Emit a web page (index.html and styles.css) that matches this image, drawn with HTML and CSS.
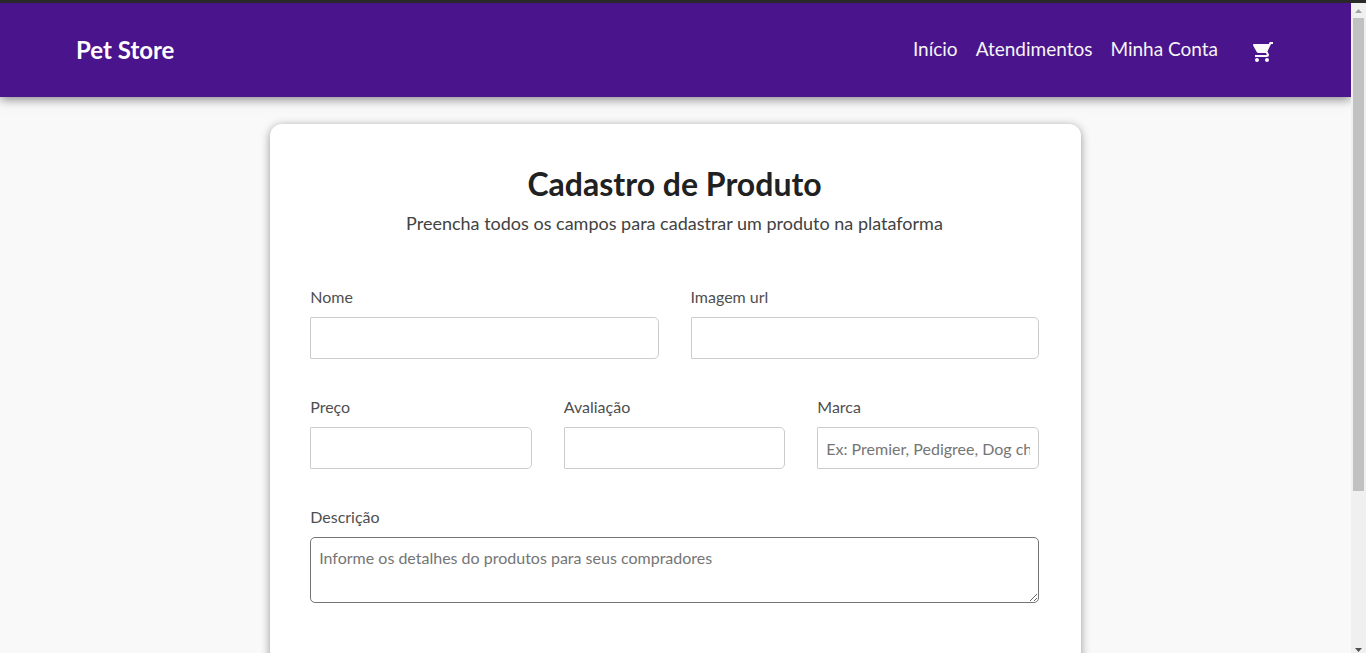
FILE: index.html
```html
<!DOCTYPE html>
<html lang="pt-BR">
<head>
<meta charset="utf-8">
<meta name="viewport" content="width=device-width, initial-scale=1">
<title>Pet Store</title>
<link rel="stylesheet" href="styles.css">
</head>
<body>
<div class="window">
  <div class="page">
    <header class="header">
      <a class="brand" href="#">Pet Store</a>
      <nav class="nav">
        <a class="nav-link" href="#">Início</a>
        <a class="nav-link" href="#">Atendimentos</a>
        <a class="nav-link" href="#">Minha Conta</a>
        <a class="cart" href="#" aria-label="Carrinho">
          <svg class="cart-icon" viewBox="0 0 24 24" aria-hidden="true"><g transform="matrix(-1 0 0 1 24 0)"><path d="M7 18c-1.100 0-1.990.9-1.990 2S5.900 22 7 22s2-.9 2-2-.9-2-2-2zM1 2v2h2l3.600 7.590-1.350 2.450c-.16.280-.25.610-.25.960 0 1.100.9 2 2 2h12v-2H7.420c-.14 0-.25-.11-.25-.25l.03-.12.900-1.630h7.450c.75 0 1.410-.41 1.750-1.030l3.580-6.490c.08-.14.120-.31.120-.48 0-.55-.45-1-1-1H5.210l-.94-2H1zm16 16c-1.100 0-1.990.9-1.990 2s.89 2 1.990 2 2-.9 2-2-.9-2-2-2z"/></g></svg>
        </a>
      </nav>
    </header>
    <main class="main">
      <form class="card">
        <h1 class="title">Cadastro de Produto</h1>
        <p class="subtitle">Preencha todos os campos para cadastrar um produto na plataforma</p>
        <div class="fields">
          <div class="row">
            <div class="field"><label class="label" for="nome">Nome</label><input class="input" id="nome" type="text"></div>
            <div class="field"><label class="label" for="imagem">Imagem url</label><input class="input" id="imagem" type="text"></div>
          </div>
          <div class="row">
            <div class="field"><label class="label" for="preco">Preço</label><input class="input" id="preco" type="text"></div>
            <div class="field"><label class="label" for="avaliacao">Avaliação</label><input class="input" id="avaliacao" type="text"></div>
            <div class="field"><label class="label" for="marca">Marca</label><input class="input" id="marca" type="text" placeholder="Ex: Premier, Pedigree, Dog chow"></div>
          </div>
          <div class="field"><label class="label" for="descricao">Descrição</label><textarea class="textarea" id="descricao" rows="2" placeholder="Informe os detalhes do produtos para seus compradores"></textarea></div>
        </div>
      </form>
    </main>
  </div>
  <div class="scrollbar" aria-hidden="true">
    <svg class="arrow arrow-up" viewBox="0 0 7 4"><path d="M0 4h7L3.500 0z"/></svg>
    <div class="track"><div class="thumb"></div></div>
    <svg class="arrow arrow-down" viewBox="0 0 7 4"><path d="M0 0h7L3.500 4z"/></svg>
  </div>
</div>
</body>
</html>
```
FILE: styles.css
```css
* {
  box-sizing: border-box;
}

body {
  margin: 0;
  background: #f9f9f9;
  font-family: Lato, "Open Sans", sans-serif;
  overflow: hidden;
}

.window {
  display: flex;
  height: 100vh;
  border-top: 3px solid #29292a;
}

.page {
  flex: 1;
  min-width: 0;
  overflow: hidden;
}

.header {
  display: flex;
  align-items: center;
  justify-content: space-between;
  padding: 23px 77px 23px 76px;
  background: #4a148c;
  box-shadow: 0 2px 10px rgba(0, 0, 0, 0.5);
}

.brand {
  color: #fff;
  font-size: 24px;
  line-height: 48px;
  font-weight: 700;
  text-decoration: none;
}

.nav {
  display: flex;
  align-items: center;
  gap: 18px;
}

.nav-link {
  padding-bottom: 2px;
  color: #f5f5f5;
  font-size: 19px;
  line-height: 44px;
  text-decoration: none;
}

.cart {
  display: flex;
  margin-left: 14px;
  padding-top: 4px;
}

.cart-icon {
  width: 24px;
  height: 24px;
  fill: #fafafa;
}

.main {
  padding: 27px 0;
}

.card {
  width: 60%;
  margin: 0 auto;
  padding: 40px 42px 96px 40px;
  background: #fff;
  border-radius: 12px;
  box-shadow: 0 2px 10px rgba(0, 0, 0, 0.4);
}

.title {
  margin: 0;
  color: #212121;
  font-size: 32px;
  line-height: 40px;
  font-weight: 700;
  text-align: center;
}

.subtitle {
  margin: 0;
  color: #424242;
  font-size: 18px;
  line-height: 38px;
  text-align: center;
}

.fields {
  display: flex;
  flex-direction: column;
  gap: 36px;
  margin-top: 43px;
}

.row {
  display: grid;
  grid-auto-flow: column;
  grid-auto-columns: minmax(0, 1fr);
  gap: 32px;
}

.field {
  display: flex;
  flex-direction: column;
  gap: 8px;
}

.label {
  color: #4f4f4f;
  font-size: 16px;
  line-height: 24px;
}

.input,
.textarea {
  width: 100%;
  margin: 0;
  padding: 8px;
  border: 1px solid #ccc;
  background: #fff;
  color: #424242;
  font-family: inherit;
  font-size: 16px;
  line-height: 24px;
}

.input {
  height: 42px;
  border-radius: 1px 5px 5px 1px;
}

.textarea {
  border-color: #757575;
  border-radius: 5px;
  resize: vertical;
}

.input::placeholder,
.textarea::placeholder {
  color: #757575;
}

.scrollbar {
  display: flex;
  flex-direction: column;
  align-items: center;
  width: 15px;
  padding-top: 6px;
  background: #f0f0f0;
}

.arrow {
  flex: none;
  width: 7px;
  height: 4px;
}

.arrow-up {
  fill: #a3a3a3;
}

.arrow-down {
  margin-bottom: 1px;
  fill: #505050;
}

.track {
  flex: 1;
  width: 11px;
  margin: 5px 0 7px;
}

.thumb {
  height: 76%;
  background: #c1c1c1;
}
```
